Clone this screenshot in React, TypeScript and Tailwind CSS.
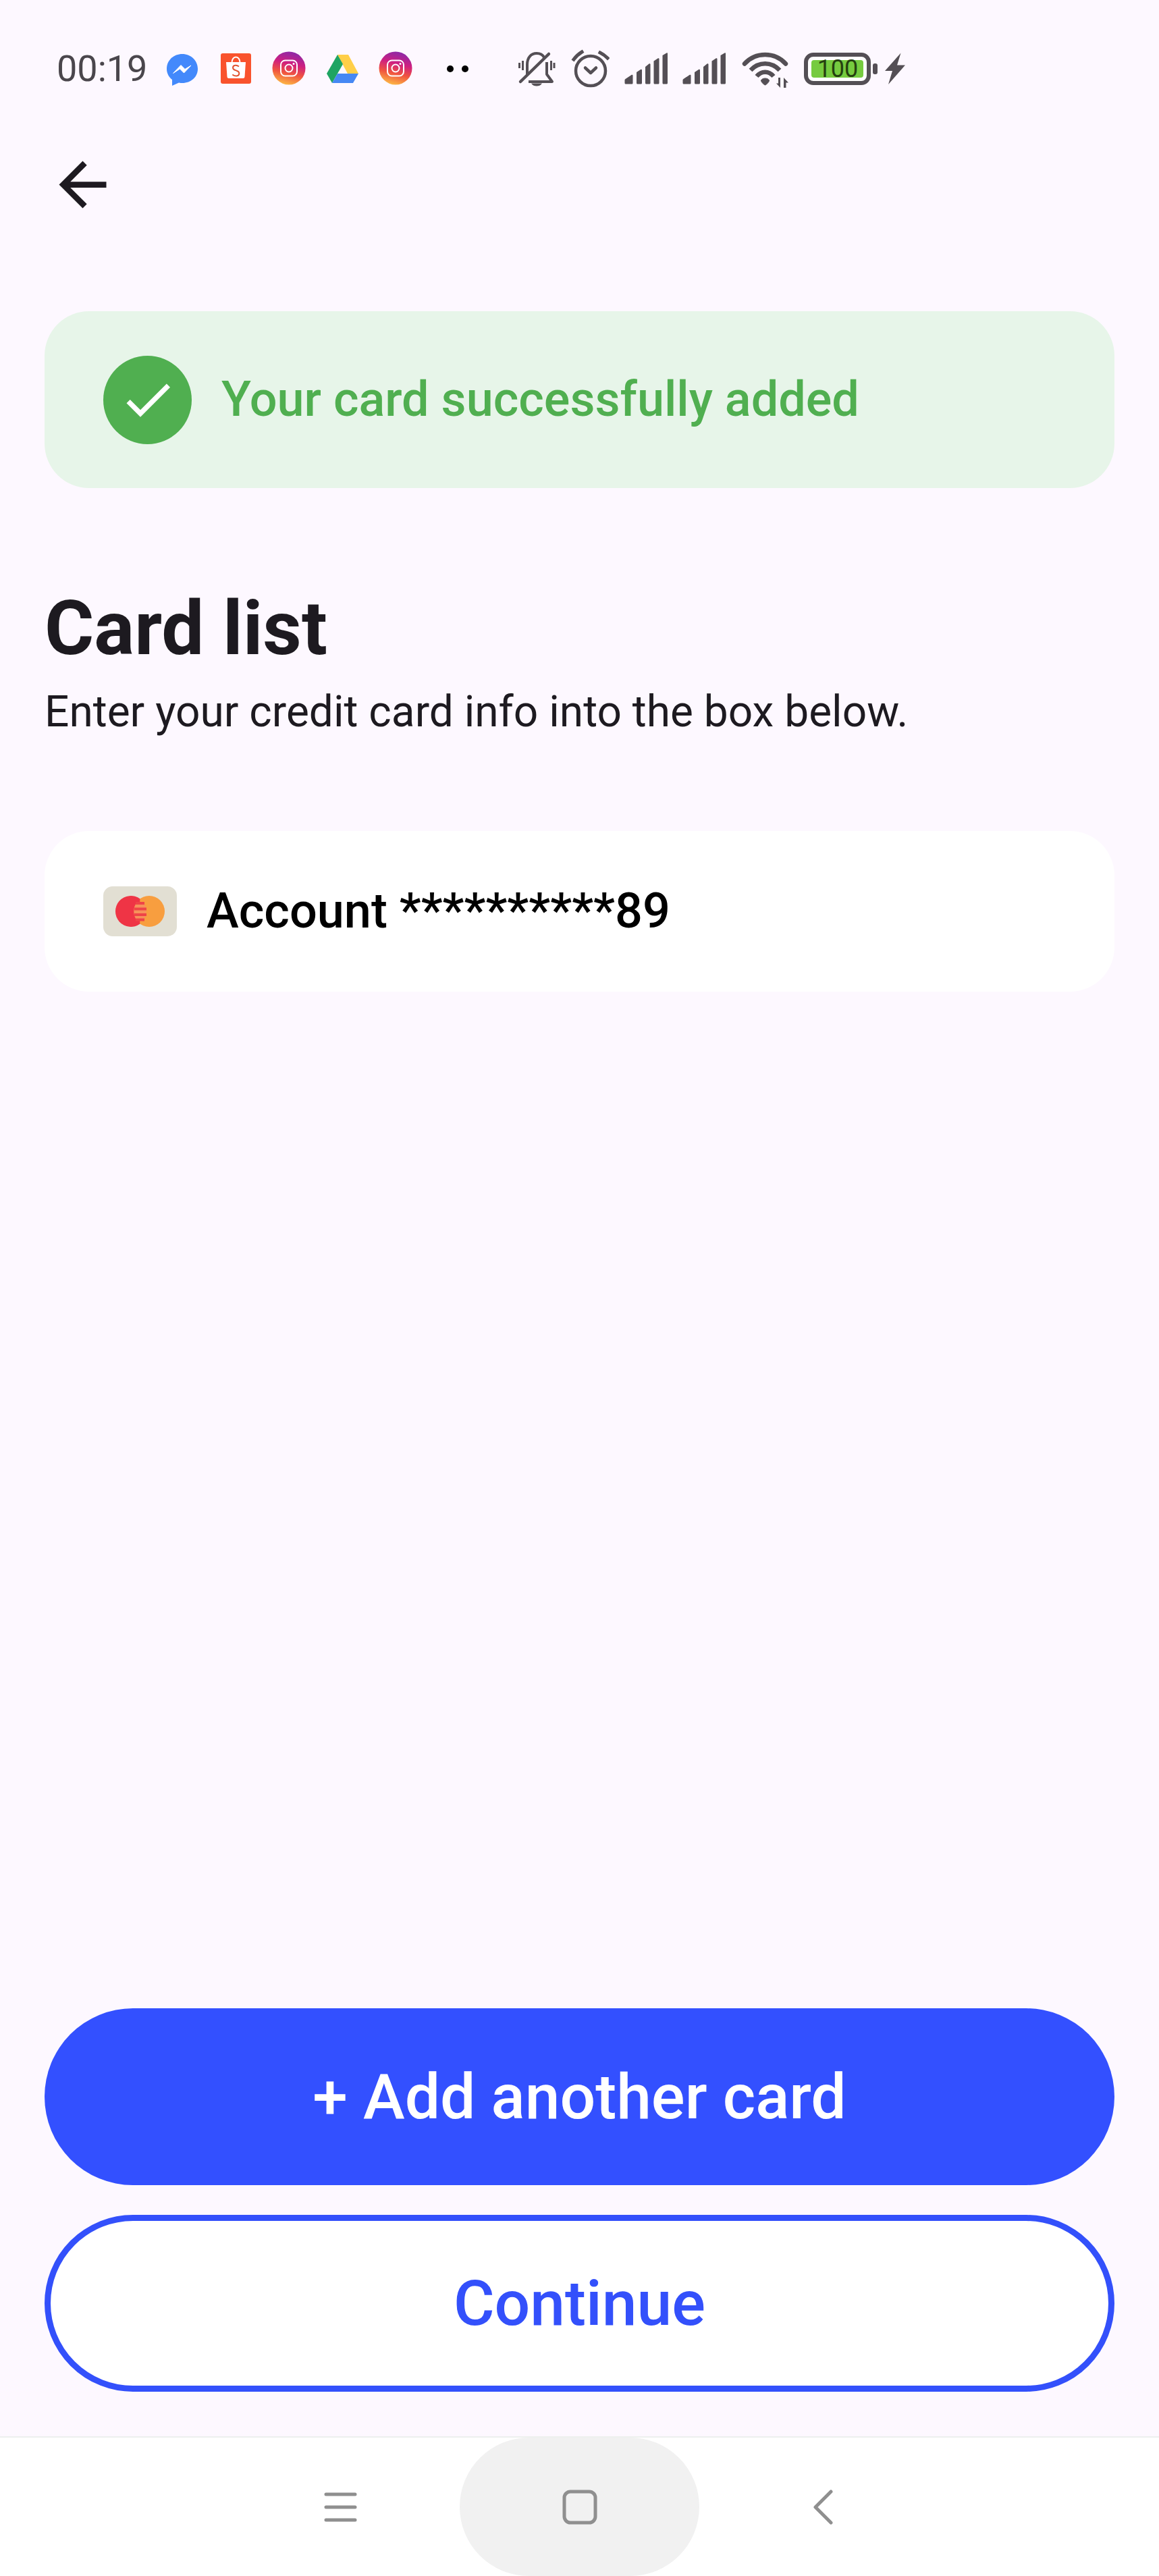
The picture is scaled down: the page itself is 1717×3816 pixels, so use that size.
import React from "react";

const INK = "#544f55";

function Messenger() {
  return (
    <svg width="50" height="60" viewBox="0 0 50 60" aria-hidden="true">
      <path d="M25 8C12 8 2 17.500 2 30c0 6.500 3 12 8 16v9l10-4.500c2 .4 3.500 .5 5 .5 13 0 23-9 23-21S38 8 25 8z" fill="#4389fb" />
      <path d="M11.500 36.500L23 24.500l6 6 9-5.500-10.500 11-6-6z" fill="#fff" stroke="#fff" strokeWidth="1" />
    </svg>
  );
}

function Shopee() {
  return (
    <svg width="50" height="60" viewBox="0 0 50 60" aria-hidden="true">
      <rect x="3" y="7" width="45" height="45" rx="3" fill="#f9532d" />
      <path d="M19.500 21c0-5 2.500-8.500 6-8.500s6 3.500 6 8.500" fill="none" stroke="#fff" strokeWidth="2" />
      <path d="M11 20h29l-1.500 21.500c-.2 1.800-1 2.500-2.500 2.500H15c-1.500 0-2.300-.7-2.500-2.500z" fill="#fff" />
      <path d="M30 26.500c-2-1.500-4-2-5.500-1.700-4.500.7-4.500 5.400-.5 6.900 3.500 1.300 6.500 2 6.300 5.300-.3 4.500-6 4.500-10 1.500" fill="none" stroke="#e0532f" strokeWidth="2" />
    </svg>
  );
}

function Instagram({ id }: { id: string }) {
  return (
    <svg width="50" height="60" viewBox="0 0 50 60" aria-hidden="true">
      <defs>
        <linearGradient id={id} x1="0.6" y1="0" x2="0.35" y2="1">
          <stop offset="0" stopColor="#8a2aa8" />
          <stop offset="0.35" stopColor="#cf1f80" />
          <stop offset="0.65" stopColor="#f0553f" />
          <stop offset="1" stopColor="#fdbb45" />
        </linearGradient>
      </defs>
      <circle cx="25" cy="29" r="24.500" fill={`url(#${id})`} />
      <rect x="13" y="17.500" width="24" height="23" rx="6.500" fill="none" stroke="#fff" strokeWidth="2" />
      <circle cx="25" cy="29" r="5.500" fill="none" stroke="#fff" strokeWidth="2" />
      <circle cx="32" cy="22.500" r="1.500" fill="#fff" />
    </svg>
  );
}

function Drive() {
  return (
    <svg width="50" height="60" viewBox="0 0 50 60" aria-hidden="true">
      <path d="M18 9h16l15 28H33z" fill="#ffcf48" />
      <path d="M18 9l8 14-16 28L2 37z" fill="#1fa463" />
      <path d="M18 37h31l-8 14H10z" fill="#4688f4" />
    </svg>
  );
}

function MutedBell() {
  return (
    <svg width="56" height="60" viewBox="0 0 56 60" fill="none" stroke={INK} strokeWidth="4" aria-hidden="true">
      <path d="M14 38V24C14 13 20 7 28 7c5 0 9 2 11 6" />
      <path d="M43 20v18l8 11H16" strokeLinejoin="round" />
      <path d="M46 8L4 49" strokeLinecap="round" strokeWidth="4.500" />
      <path d="M20 51.500h16c-2 3-5 4-8 4s-6-1-8-4z" fill={INK} stroke="none" />
      <path d="M2.500 21v8M7.500 18v14M49.500 18v14M54 21v8" strokeWidth="3" />
    </svg>
  );
}

function Alarm() {
  return (
    <svg width="58" height="60" viewBox="0 0 58 60" fill="none" stroke={INK} aria-hidden="true">
      <circle cx="30" cy="33" r="22" strokeWidth="4.500" />
      <path d="M5 16c3-4 7-8 12-11M55 14c-3-3-7-6-11-8" strokeWidth="5" strokeLinecap="square" />
      <path d="M22 28.500l8 7.500 8-7.500" strokeWidth="4.500" strokeLinecap="round" strokeLinejoin="round" />
    </svg>
  );
}

function Signal() {
  return (
    <svg width="64" height="60" viewBox="0 0 64 60" fill={INK} aria-hidden="true">
      <path d="M1.500 45l9-6c1.200-.7 2 0 2 1v11c0 .8-.5 1.500-1.500 1.500H2c-1 0-1.500-.7-1.500-1.500v-4c0-1 .3-1.500 1-2z" />
      <path d="M18 35l6-4c1-.7 2-.2 2 1v19c0 .8-.5 1.500-1.500 1.500h-5c-1 0-1.500-.7-1.500-1.500z" />
      <path d="M31 27l5.500-4.500c1-.6 2-.2 2 1V51c0 .8-.5 1.500-1.500 1.500h-4.500c-1 0-1.500-.7-1.500-1.500z" />
      <path d="M43.500 18.500l6-4c1-.6 2-.2 2 1V51c0 .8-.5 1.500-1.500 1.500h-5c-1 0-1.500-.7-1.500-1.500z" />
      <path d="M56.500 10l6-3.500c1-.6 1.500-.2 1.500 1V51c0 .8-.5 1.500-1.500 1.500h-4.500c-1 0-1.500-.7-1.500-1.500z" />
    </svg>
  );
}

function Wifi() {
  return (
    <svg width="72" height="60" viewBox="0 0 72 60" fill="none" stroke={INK} aria-hidden="true">
      <path d="M6 22.500C22 4.500 51 4.500 67 22.500" strokeWidth="6.500" strokeLinecap="round" />
      <path d="M15 32c12-13 31-13 43 0" strokeWidth="6.500" />
      <path d="M24 41c7-8.500 18-8.500 25 0" strokeWidth="6.500" />
      <path d="M30.500 47c2-4 10-4 12 0 0 3-5 7-6 7s-6-4-6-7z" fill={INK} />
      <path d="M59 43v15l-6-6.500h3V43zM64 58V43l7 7.500h-3.500V58z" fill={INK} stroke="none" />
    </svg>
  );
}

function Battery() {
  return (
    <div className="flex items-center gap-[3px]">
      <div className="flex h-12 w-[99px] items-center rounded-[14px] border-[6px] border-[#544f55] bg-white p-[5px]">
        <div className="flex h-[26px] w-full items-center justify-center rounded-[4px] bg-[#76cb3f] text-[36px] leading-none text-[#24400f]">
          100
        </div>
      </div>
      <div className="h-4 w-[7px] rounded-[3px] bg-[#544f55]" />
    </div>
  );
}

function Bolt() {
  return (
    <svg width="32" height="60" viewBox="0 0 32 60" fill={INK} aria-hidden="true">
      <path d="M24.500 6.500L1 33h11L6 53l25-28.500H19z" />
    </svg>
  );
}

function StatusBar() {
  return (
    <header className="flex h-[204px] shrink-0 items-center pl-[84px]">
      <span className="text-[54px] leading-none text-[#4a464c]">00:19</span>
      <div className="ml-[27px] flex gap-[29px]">
        <Messenger />
        <Shopee />
        <Instagram id="ig-first" />
        <Drive />
        <Instagram id="ig-second" />
      </div>
      <div className="ml-[51px] flex gap-3">
        <span className="size-[10px] rounded-full bg-black" />
        <span className="size-[10px] rounded-full bg-black" />
      </div>
      <div className="ml-[73px] flex items-center gap-[22px]">
        <MutedBell />
        <Alarm />
        <Signal />
        <Signal />
        <Wifi />
        <div className="flex items-center gap-[10px]">
          <Battery />
          <Bolt />
        </div>
      </div>
    </header>
  );
}

function CardBrand() {
  return (
    <svg width="109" height="74" viewBox="0 0 109 74" role="img" aria-label="Mastercard">
      <rect width="109" height="74" rx="14" fill="#e2dfd3" />
      <circle cx="68" cy="37" r="23" fill="#f89e3f" />
      <path d="M54.500 18.400A23 23 0 1 0 54.500 55.600z" fill="#ef3445" />
      <path d="M54.500 18.400A23 23 0 0 1 54.500 55.600z" fill="#f89e3f" />
      <path d="M50 23h9a23 23 0 0 1 0 28h-9a23 23 0 0 1 0-28z" fill="#f7915a" />
      <path d="M48 25h13M46 33.500h18M46 42h18M48 49.500h13" stroke="#ef4447" strokeWidth="4" />
    </svg>
  );
}

export default function App() {
  return (
    <div className="flex min-h-screen flex-col bg-[#fdf8ff] font-['Roboto',sans-serif] text-[#1d1a20]">
      <StatusBar />
      <main className="flex grow flex-col px-[66px] pb-[66px]">
        <nav className="flex h-[138px] items-center pl-1">
          <button type="button" aria-label="Back" className="flex size-[105px] items-center justify-center">
            <svg width="105" height="105" viewBox="0 0 24 24" fill="#1d1a20" aria-hidden="true">
              <path d="M20 11H7.830l5.590-5.590L12 4l-8 8 8 8 1.410-1.410L7.830 13H20v-2z" />
            </svg>
          </button>
        </nav>

        <div role="status" className="mt-[119px] flex h-[262px] items-center gap-11 rounded-[66px] bg-[#e7f5e9] px-[87px]">
          <span className="flex size-[131px] items-center justify-center rounded-full bg-[#50af50]">
            <svg width="88" height="88" viewBox="0 0 24 24" fill="#fff" aria-hidden="true">
              <path d="M9 16.170L4.830 12l-1.420 1.410L9 19 21 7l-1.410-1.410z" />
            </svg>
          </span>
          <p className="text-[72px] leading-none font-medium text-[#50af50]">Your card successfully added</p>
        </div>

        <h1 className="mt-[144px] text-[112px] leading-[128px] font-bold">Card list</h1>
        <p className="mt-6 text-[64px] leading-[72px]">Enter your credit card info into the box below.</p>

        <section className="mt-[140px] flex h-[238px] items-center gap-11 rounded-[66px] bg-white px-[87px]">
          <CardBrand />
          <p className="text-[72px] leading-none font-medium text-black">Account **********89</p>
        </section>

        <div className="mt-auto flex flex-col gap-11">
          <button type="button" className="h-[262px] w-full rounded-full bg-[#3350ff] text-[93px] leading-none font-medium text-white">
            + Add another card
          </button>
          <button type="button" className="h-[262px] w-full rounded-full border-[9px] border-[#3350fb] bg-white text-[93px] leading-none font-medium text-[#3350fb]">
            Continue
          </button>
        </div>
      </main>

      <footer className="flex h-[207px] shrink-0 justify-center border-t-2 border-[#edf0ee] bg-white">
        <button type="button" aria-label="Recent apps" className="flex w-[355px] items-center justify-center">
          <svg width="52" height="52" viewBox="0 0 52 52" stroke="#8f8f8f" strokeWidth="5" strokeLinecap="round" aria-hidden="true">
            <path d="M5 7h43M5 26h43M5 45h43" />
          </svg>
        </button>
        <button type="button" aria-label="Home" className="flex w-[355px] items-center justify-center rounded-full bg-[#f1f1f1]">
          <svg width="52" height="52" viewBox="0 0 52 52" fill="none" stroke="#8f8f8f" strokeWidth="5" aria-hidden="true">
            <rect x="3" y="3" width="46" height="46" rx="9" />
          </svg>
        </button>
        <button type="button" aria-label="Back" className="flex w-[355px] items-center justify-center">
          <svg width="52" height="52" viewBox="0 0 52 52" fill="none" stroke="#8f8f8f" strokeWidth="5" strokeLinecap="round" strokeLinejoin="round" aria-hidden="true">
            <path d="M43 3L20 26l23 23" />
          </svg>
        </button>
      </footer>
    </div>
  );
}
